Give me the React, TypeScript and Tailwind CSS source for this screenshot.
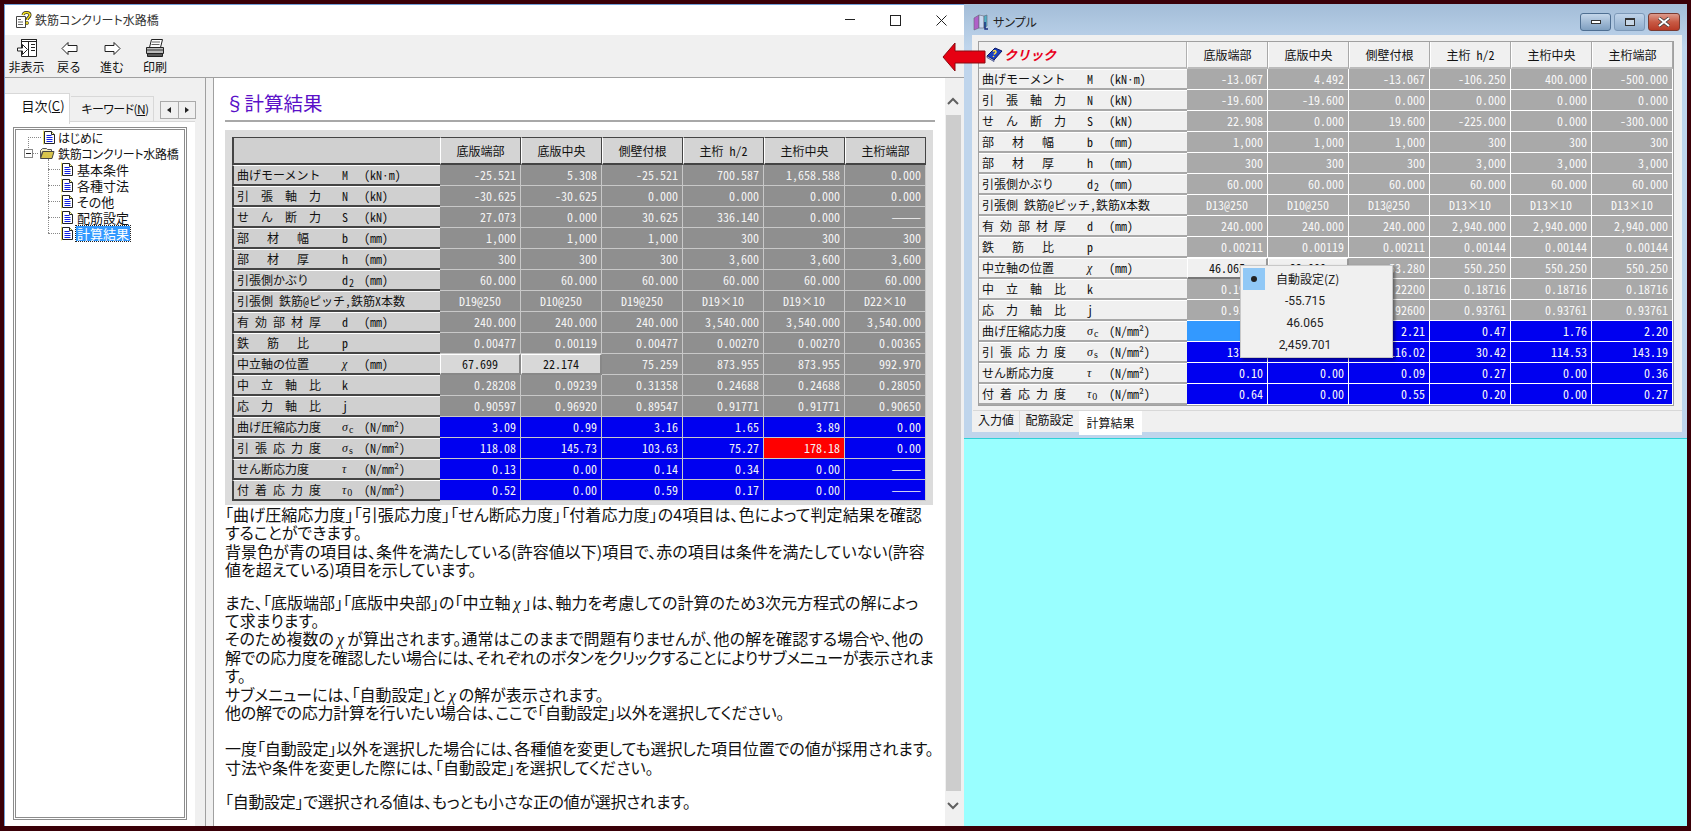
import type { ReactNode } from "react";

type Kind = "gray" | "button" | "blue" | "center";

interface Row {
    name: string;
    track: string;
    sym?: string;
    greek?: boolean;
    sub?: string;
    unit?: string;
    kind: Kind;
    vals: string[];
}

const heads = ["底版端部", "底版中央", "側壁付根", "主桁 h/2", "主桁中央", "主桁端部"];

function rows(v: string[][]): Row[] {
    return [
        { name: "曲げモーメント", track: "", sym: "M", unit: "(kN·m)", kind: "gray", vals: v[0] },
        { name: "引張軸力", track: "tracking-[12px]", sym: "N", unit: "(kN)", kind: "gray", vals: v[1] },
        { name: "せん断力", track: "tracking-[12px]", sym: "S", unit: "(kN)", kind: "gray", vals: v[2] },
        { name: "部材幅", track: "tracking-[18px]", sym: "b", unit: "(mm)", kind: "gray", vals: v[3] },
        { name: "部材厚", track: "tracking-[18px]", sym: "h", unit: "(mm)", kind: "gray", vals: v[4] },
        { name: "引張側かぶり", track: "", sym: "d", sub: "2", unit: "(mm)", kind: "gray", vals: v[5] },
        { name: "引張側 鉄筋@ピッチ,鉄筋X本数", track: "", kind: "center", vals: v[6] },
        { name: "有効部材厚", track: "tracking-[6px]", sym: "d", unit: "(mm)", kind: "gray", vals: v[7] },
        { name: "鉄筋比", track: "tracking-[18px]", sym: "p", kind: "gray", vals: v[8] },
        { name: "中立軸の位置", track: "", sym: "χ", greek: true, unit: "(mm)", kind: "button", vals: v[9] },
        { name: "中立軸比", track: "tracking-[12px]", sym: "k", kind: "gray", vals: v[10] },
        { name: "応力軸比", track: "tracking-[12px]", sym: "j", kind: "gray", vals: v[11] },
        { name: "曲げ圧縮応力度", track: "", sym: "σ", greek: true, sub: "c", unit: "(N/mm²)", kind: "blue", vals: v[12] },
        { name: "引張応力度", track: "tracking-[6px]", sym: "σ", greek: true, sub: "s", unit: "(N/mm²)", kind: "blue", vals: v[13] },
        { name: "せん断応力度", track: "", sym: "τ", greek: true, unit: "(N/mm²)", kind: "blue", vals: v[14] },
        { name: "付着応力度", track: "tracking-[6px]", sym: "τ", greek: true, sub: "0", unit: "(N/mm²)", kind: "blue", vals: v[15] },
    ];
}

const dash = "———";

const leftRows = rows([
    ["-25.521", "5.308", "-25.521", "700.587", "1,658.588", "0.000"],
    ["-30.625", "-30.625", "0.000", "0.000", "0.000", "0.000"],
    ["27.073", "0.000", "30.625", "336.140", "0.000", dash],
    ["1,000", "1,000", "1,000", "300", "300", "300"],
    ["300", "300", "300", "3,600", "3,600", "3,600"],
    ["60.000", "60.000", "60.000", "60.000", "60.000", "60.000"],
    ["D19@250", "D10@250", "D19@250", "D19×10", "D19×10", "D22×10"],
    ["240.000", "240.000", "240.000", "3,540.000", "3,540.000", "3,540.000"],
    ["0.00477", "0.00119", "0.00477", "0.00270", "0.00270", "0.00365"],
    ["67.699", "22.174", "75.259", "873.955", "873.955", "992.970"],
    ["0.28208", "0.09239", "0.31358", "0.24688", "0.24688", "0.28050"],
    ["0.90597", "0.96920", "0.89547", "0.91771", "0.91771", "0.90650"],
    ["3.09", "0.99", "3.16", "1.65", "3.89", "0.00"],
    ["118.08", "145.73", "103.63", "75.27", "178.18", "0.00"],
    ["0.13", "0.00", "0.14", "0.34", "0.00", dash],
    ["0.52", "0.00", "0.59", "0.17", "0.00", dash],
]);

// cells fully under the popup menu stay empty
const rightRows = rows([
    ["-13.067", "4.492", "-13.067", "-106.250", "400.000", "-500.000"],
    ["-19.600", "-19.600", "0.000", "0.000", "0.000", "0.000"],
    ["22.908", "0.000", "19.600", "-225.000", "0.000", "-300.000"],
    ["1,000", "1,000", "1,000", "300", "300", "300"],
    ["300", "300", "300", "3,000", "3,000", "3,000"],
    ["60.000", "60.000", "60.000", "60.000", "60.000", "60.000"],
    ["D13@250", "D10@250", "D13@250", "D13×10", "D13×10", "D13×10"],
    ["240.000", "240.000", "240.000", "2,940.000", "2,940.000", "2,940.000"],
    ["0.00211", "0.00119", "0.00211", "0.00144", "0.00144", "0.00144"],
    ["46.065", "22.000", "53.280", "550.250", "550.250", "550.250"],
    ["0.19194", "", "0.22200", "0.18716", "0.18716", "0.18716"],
    ["0.93602", "", "0.92600", "0.93761", "0.93761", "0.93761"],
    ["", "", "2.21", "0.47", "1.76", "2.20"],
    ["137.44", "", "116.02", "30.42", "114.53", "143.19"],
    ["0.10", "0.00", "0.09", "0.27", "0.00", "0.36"],
    ["0.64", "0.00", "0.55", "0.20", "0.00", "0.27"],
]);

function Label({ row }: { row: Row }) {
    return (
        <>
            <span className={`shrink-0 whitespace-nowrap ${row.sym ? "w-[105px]" : "w-[205px]"} ${row.track}`}>{row.name}</span>
            {row.sym && (
                <span className={`flex w-[22px] shrink-0 items-baseline ${row.greek ? "font-['Liberation_Serif',serif] italic" : ""}`}>
                    {row.sym}
                    {row.sub && <span className="ml-px translate-y-[2px] text-[10px] not-italic">{row.sub}</span>}
                </span>
            )}
            {row.unit && <span className="whitespace-nowrap">{row.unit}</span>}
        </>
    );
}

function LeftTable() {
    return (
        <div className="w-[694px] text-[12px] leading-none text-[#111] [font-feature-settings:'hwid']">
            <div className="flex h-[28px]">
                <div className="w-[208px] border-t border-l-2 border-b-2 border-[#444] bg-[#d0d0d0]" />
                {heads.map((h) => (
                    <div key={h} className="flex w-[81px] items-center justify-center border-t border-r border-b-2 border-[#444] border-l border-l-white bg-[#d4d4d4]">
                        {h}
                    </div>
                ))}
            </div>
            {leftRows.map((row) => (
                <div key={row.name} className="flex h-[21px]">
                    <div className="flex w-[208px] items-center border-t border-l-2 border-b-2 border-t-white border-l-[#444] border-b-[#444] bg-[#d0d0d0] pl-[3px]">
                        <Label row={row} />
                    </div>
                    {row.vals.map((v, i) => {
                        if (row.kind === "button" && i < 2) {
                            return (
                                <div key={i} className="flex w-[81px] items-center justify-center border-t border-l border-r-2 border-b-2 border-t-white border-l-white border-r-[#888] border-b-[#888] bg-[#d8d8d8]">
                                    {v}
                                </div>
                            );
                        }
                        const red = v === "178.18";
                        const bg = red ? "bg-[#ff0000]" : row.kind === "blue" ? "bg-[#0000f0]" : "bg-[#8f8f8f]";
                        return (
                            <div key={i} className={`flex w-[81px] items-center border-r border-b border-[#c8c8c8] text-[#f4f4f4] ${bg} ${row.kind === "center" ? "justify-center" : "justify-end pr-[4px]"}`}>
                                {v}
                            </div>
                        );
                    })}
                </div>
            ))}
        </div>
    );
}

function RightTable() {
    return (
        <div className="w-[696px] border border-[#a0a0a0] text-[12px] leading-none text-[#111] [font-feature-settings:'hwid']">
            <div className="flex h-[27px]">
                <div className="flex w-[208px] items-center gap-px border-r border-b-2 border-r-[#b0b0b0] border-b-[#bbb] bg-[#f0f0f0] pl-[7px]">
                    <BookIcon />
                    <span className="text-[13px] font-bold italic text-[#e8001c] [font-feature-settings:'normal']">クリック</span>
                </div>
                {heads.map((h) => (
                    <div key={h} className="flex w-[81px] items-center justify-center border-r border-b-2 border-r-[#a8a8a8] border-b-[#bbb] border-l border-l-white bg-[#f0f0f0]">
                        {h}
                    </div>
                ))}
            </div>
            {rightRows.map((row) => (
                <div key={row.name} className="flex h-[21px]">
                    <div className="flex w-[208px] items-center border-t border-b-2 border-t-white border-b-[#a8a8a8] bg-[#f0f0f0] pl-[3px]">
                        <Label row={row} />
                    </div>
                    {row.vals.map((v, i) => {
                        if (row.kind === "button" && i < 2) {
                            return (
                                <div key={i} className="flex w-[81px] items-center justify-center border-t border-l border-r-2 border-b-2 border-t-white border-l-white border-r-[#999] border-b-[#777] bg-[#f0f0f0]">
                                    {v}
                                </div>
                            );
                        }
                        const picked = row.name === "曲げ圧縮応力度" && i === 0;
                        const bg = picked ? "bg-[#3399ff]" : row.kind === "blue" ? "bg-[#0000f0]" : "bg-[#a9a9a9]";
                        return (
                            <div key={i} className={`flex w-[81px] items-center border-r border-b border-white text-[#f8f8f8] ${bg} ${row.kind === "center" ? "justify-center" : "justify-end pr-[4px]"}`}>
                                {v}
                            </div>
                        );
                    })}
                </div>
            ))}
        </div>
    );
}

function PageIcon() {
    return (
        <svg width="13" height="15" viewBox="0 0 13 15" className="shrink-0">
            <path d="M1.5 1.5h7l3 3v9h-10z" fill="#fff" stroke="#222" />
            <path d="M0.5 .5v14" stroke="#e8e070" />
            <path d="M3.5 5.5h5M3.5 7.5h6M3.5 9.5h6M3.5 11.5h6" stroke="#1020e0" />
            <path d="M8.5 1.5v3h3" fill="#ffff99" stroke="#222" />
        </svg>
    );
}

function FolderIcon() {
    return (
        <svg width="16" height="13" viewBox="0 0 16 13" className="shrink-0">
            <path d="M1.5 3.5l2-2h4l1 1h4v2h-9l-2 6z" fill="#f4ecc0" stroke="#555" />
            <path d="M1.5 11.5l2.5-7h11l-2 7z" fill="#d8c44c" stroke="#444" />
        </svg>
    );
}

function BookIcon() {
    return (
        <svg width="17" height="15" viewBox="0 0 17 15" className="shrink-0">
            <path d="M1 9l8-8 7 3-8 9z" fill="#1a3fc0" stroke="#0a1660" />
            <path d="M1 9l7 4 0 1.5-7-4z" fill="#c8d4f0" stroke="#0a1660" strokeWidth=".6" />
            <path d="M7 4.5c1-1.5 3.5-.8 3 .8-.3 1-1.6 1.100-2 2.200" fill="none" stroke="#ffe040" strokeWidth="1.400" />
            <circle cx="7.500" cy="9.500" r=".8" fill="#ffe040" />
        </svg>
    );
}

function ToolBtn({ label, width, children }: { label: string; width: string; children: ReactNode }) {
    return (
        <div className={`flex flex-col items-center ${width}`}>
            <div className="flex h-[22px] items-center">{children}</div>
            <span className="mt-px text-[12px] leading-[14px] text-[#111]">{label}</span>
        </div>
    );
}

function TreeRow({ text, level, selected, folder }: { text: string; level: 1 | 2; selected?: boolean; folder?: boolean }) {
    const indent = folder ? "gap-[2px] pl-[23px]" : level === 1 ? "gap-px pl-[27px]" : "gap-[2px] pl-[45px]";
    const size = level === 1 ? "text-[12px] tracking-[-0.3px]" : "text-[13px]";
    return (
        <div className={`flex h-[16px] items-center ${indent}`}>
            {folder ? <FolderIcon /> : <PageIcon />}
            <span className={`whitespace-nowrap px-px leading-[15px] [font-feature-settings:'palt'] ${size} ${selected ? "bg-[#3399ff] text-white outline-1 outline-dotted outline-[#222]" : "text-[#111]"}`}>
                {text}
            </span>
        </div>
    );
}

function Tree() {
    return (
        <div className="relative h-full border-[3px] border-double border-[#8c8c8c] bg-white">
            <div className="-mt-px">
                <TreeRow text="はじめに" level={1} />
                <TreeRow text="鉄筋コンクリート水路橋" level={1} folder />
                <TreeRow text="基本条件" level={2} />
                <TreeRow text="各種寸法" level={2} />
                <TreeRow text="その他" level={2} />
                <TreeRow text="配筋設定" level={2} />
                <TreeRow text="計算結果" level={2} selected />
            </div>
            <div className="absolute left-[12px] top-[7px] h-[13px] border-l border-dotted border-[#888]" />
            <div className="absolute left-[12px] top-[7px] w-[13px] border-t border-dotted border-[#888]" />
            <div className="absolute left-[8px] top-[19px] flex h-[9px] w-[9px] items-center justify-center border border-[#888] bg-white">
                <div className="h-px w-[5px] bg-[#222]" />
            </div>
            <div className="absolute left-[17px] top-[23px] w-[5px] border-t border-dotted border-[#888]" />
            {[39, 55, 71, 87, 103].map((t) => (
                <div key={t} className="absolute left-[32px] w-[12px] border-t border-dotted border-[#888]" style={{ top: t }} />
            ))}
            <div className="absolute left-[32px] top-[29px] h-[74px] border-l border-dotted border-[#888]" />
        </div>
    );
}

function Chi() {
    return <span className="mx-[3px] font-['Liberation_Serif',serif] italic leading-[0]">χ</span>;
}

function HelpPane() {
    return (
        <div className="flex min-h-0 flex-1 bg-white">
            <div className="min-w-0 flex-1 pl-[11px] pt-[14px]">
                <h2 className="flex h-[22px] text-[19.5px] leading-[22px] text-[#5a10c8]">§計算結果</h2>
                <div className="mt-[6px] h-[2px] w-[710px] bg-[#a8a8a8]" />
                <div className="mt-[8px] w-[708px] bg-[#dcdcdc] px-[7px] pb-[4px] pt-[7px]">
                    <LeftTable />
                </div>
                <div className="text-[16px] leading-[18.4px] text-[#111] [font-feature-settings:'palt']">
                    <div className="whitespace-nowrap">
                        <p className="tracking-[0.08px]">「曲げ圧縮応力度」「引張応力度」「せん断応力度」「付着応力度」の4項目は、色によって判定結果を確認</p>
                        <p>することができます。</p>
                        <p>背景色が青の項目は、条件を満たしている(許容値以下)項目で、赤の項目は条件を満たしていない(許容</p>
                        <p>値を超えている)項目を示しています。</p>
                    </div>
                    <div className="mt-[14px] whitespace-nowrap">
                        <p>また、「底版端部」「底版中央部」の「中立軸<Chi />」は、軸力を考慮しての計算のため3次元方程式の解によっ</p>
                        <p>て求まります。</p>
                        <p className="tracking-[0.08px]">そのため複数の<Chi />が算出されます。通常はこのままで問題有りませんが、他の解を確認する場合や、他の</p>
                        <p className="tracking-[-0.33px]">解での応力度を確認したい場合には、それぞれのボタンをクリックすることによりサブメニューが表示されま</p>
                        <p>す。</p>
                        <p>サブメニューには、「自動設定」と<Chi />の解が表示されます。</p>
                        <p className="tracking-[-0.2px]">他の解での応力計算を行いたい場合は、ここで「自動設定」以外を選択してください。</p>
                    </div>
                    <div className="mt-[18px] whitespace-nowrap">
                        <p className="tracking-[-0.08px]">一度「自動設定」以外を選択した場合には、各種値を変更しても選択した項目位置での値が採用されます。</p>
                        <p>寸法や条件を変更した際には、「自動設定」を選択してください。</p>
                    </div>
                    <p className="mt-[16px] whitespace-nowrap tracking-[-0.3px]">「自動設定」で選択される値は、もっとも小さな正の値が選択されます。</p>
                </div>
            </div>
            <div className="flex w-[19px] shrink-0 flex-col items-center bg-[#f0f0f0] pr-[3px]">
                <svg width="12" height="8" viewBox="0 0 12 8" className="mt-[19px]">
                    <path d="M1 7l5-5 5 5" fill="none" stroke="#606060" strokeWidth="2" />
                </svg>
                <div className="mt-[10px] w-[15px] flex-1 bg-[#cdcdcd]" />
                <svg width="12" height="8" viewBox="0 0 12 8" className="mb-[16px] mt-[11px]">
                    <path d="M1 1l5 5 5-5" fill="none" stroke="#606060" strokeWidth="2" />
                </svg>
            </div>
        </div>
    );
}

function HelpWindow() {
    return (
        <div className="flex w-[960px] shrink-0 flex-col border-l border-t border-[#6f9fd8] bg-white font-['Noto_Sans_CJK_JP',sans-serif]">
            <div className="flex h-[30px] shrink-0 items-center bg-white">
                <svg width="20" height="20" viewBox="0 0 20 20" className="ml-[9px]">
                    <path d="M2.500 6.500h9v11h-9z" fill="#fff" stroke="#444" />
                    <path d="M4 9.500h3M4 12h5M4 14.500h5" stroke="#666" />
                    <path d="M9 5c.5-3 7-3.500 7 0 0 2.500-3 2.500-3 5" fill="none" stroke="#222" strokeWidth="3" />
                    <path d="M9 5c.5-3 7-3.500 7 0 0 2.500-3 2.500-3 5" fill="none" stroke="#f4e020" strokeWidth="1.600" />
                    <circle cx="13" cy="13" r="1.600" fill="#f4e020" stroke="#222" strokeWidth=".6" />
                </svg>
                <span className="ml-px text-[12px] text-[#333] [font-feature-settings:'palt']">鉄筋コンクリート水路橋</span>
                <div className="flex-1" />
                <div className="mb-[2px] mr-[35px] h-px w-[10px] bg-[#222]" />
                <div className="mr-[35px] h-[11px] w-[11px] border border-[#222]" />
                <svg width="11" height="11" viewBox="0 0 11 11" className="mr-[17px]">
                    <path d="M.5.5l10 10M10.500.5l-10 10" stroke="#222" />
                </svg>
            </div>
            <div className="flex h-[43px] shrink-0 border-b border-[#a0a0a0] bg-[#f0f0f0] pt-[2px]">
                <ToolBtn label="非表示" width="w-[43px]">
                    <svg width="22" height="20" viewBox="0 0 22 20">
                        <path d="M5.500 1.500h15v17h-15z" fill="#fff" stroke="#222" />
                        <path d="M5.500 1.500h15v2h-15zM12.500 3.500v15" fill="none" stroke="#222" />
                        <path d="M15 6.500h4M15 9.500h4M15 12.500h4" stroke="#222" />
                        <path d="M1.500 10h5v-3.500l5 5-5 5v-3.500h-5z" fill="#fff" stroke="#222" />
                    </svg>
                </ToolBtn>
                <ToolBtn label="戻る" width="w-[42px]">
                    <svg width="17" height="13" viewBox="0 0 17 13">
                        <path d="M7 .5l-6 6 6 6v-3h9v-6h-9z" fill="#fff" stroke="#222" />
                    </svg>
                </ToolBtn>
                <ToolBtn label="進む" width="w-[44px]">
                    <svg width="17" height="13" viewBox="0 0 17 13">
                        <path d="M10 .5l6 6-6 6v-3h-9v-6h9z" fill="#fff" stroke="#222" />
                    </svg>
                </ToolBtn>
                <ToolBtn label="印刷" width="w-[42px]">
                    <svg width="20" height="20" viewBox="0 0 20 20">
                        <path d="M6.500 1.500h11l-2 8h-11z" fill="#fff" stroke="#222" />
                        <path d="M7 4h8M6.500 6.500h8" stroke="#666" />
                        <path d="M1.500 9.500h17v6h-17z" fill="#bbb" stroke="#222" />
                        <path d="M2.500 15.500h15v3h-15z" fill="#555" stroke="#222" />
                        <path d="M1.500 12h17" stroke="#333" />
                    </svg>
                </ToolBtn>
            </div>
            <div className="flex min-h-0 flex-1">
                <div className="flex w-[200px] shrink-0 flex-col bg-[#f0f0f0] pt-[15px]">
                    <div className="relative z-10 flex h-[28px] shrink-0">
                        <div className="flex h-[31px] w-[65px] items-center justify-center border-r border-t border-[#d8d8d8] bg-white pb-[6px] pl-[12px] text-[13px] text-[#111] [font-feature-settings:'palt']">
                            <span>目次(<u>C</u>)</span>
                        </div>
                        <div className="ml-px mt-[3px] flex h-[25px] w-[83px] items-center justify-center border-r border-t border-[#d8d8d8] bg-[#f0f0f0] pl-[6px] text-[12px] tracking-[-0.6px] text-[#111] [font-feature-settings:'palt']">
                            <span>キーワード(<u>N</u>)</span>
                        </div>
                        <div className="ml-[6px] mt-[8px] flex h-[18px] w-[36px] border border-[#aaa] bg-[#f0f0f0]">
                            <div className="flex flex-1 items-center justify-center border-r border-[#aaa]">
                                <div className="h-0 w-0 border-y-[3px] border-r-[4px] border-y-transparent border-r-[#222]" />
                            </div>
                            <div className="flex flex-1 items-center justify-center">
                                <div className="h-0 w-0 border-y-[3px] border-l-[4px] border-y-transparent border-l-[#222]" />
                            </div>
                        </div>
                    </div>
                    <div className="min-h-0 w-[190px] flex-1 border-t border-[#d8d8d8] bg-white px-[8px] pb-[6px] pt-[5px]">
                        <Tree />
                    </div>
                </div>
                <div className="w-[9px] shrink-0 border-x border-[#a0a0a0] bg-[#f0f0f0]" />
                <HelpPane />
            </div>
        </div>
    );
}

function SampleWindow() {
    return (
        <div className="flex h-[434px] shrink-0 flex-col bg-gradient-to-b from-[#a3bdd8] from-0% to-[#bfd5ec] to-[10%] pb-[6px] pl-[8px] pr-[5px]">
            <div className="flex h-[31px] shrink-0 items-center pt-[5px]">
                <svg width="18" height="18" viewBox="0 0 18 18">
                    <path d="M2 5l5-3v13l-5 2z" fill="#b060c8" stroke="#667" strokeWidth=".6" />
                    <path d="M7 2l5 1 0 12-5 0z" fill="#c8d8f0" stroke="#667" strokeWidth=".6" />
                    <path d="M12 3l3-1v11l-3 2z" fill="#50b0c8" stroke="#667" strokeWidth=".6" />
                    <path d="M13 9v7h3" fill="none" stroke="#1a3080" strokeWidth="1.500" />
                </svg>
                <span className="ml-[3px] text-[12px] text-[#222] [font-feature-settings:'palt']">サンプル</span>
                <div className="flex-1" />
                <div className="flex h-[18px] w-[31px] items-center justify-center rounded-[3px] border border-[#4f6f92] bg-gradient-to-b from-[#c4d6ea] to-[#7f9fc0]">
                    <div className="h-[4px] w-[10px] border border-[#333] bg-white" />
                </div>
                <div className="ml-[3px] flex h-[18px] w-[31px] items-center justify-center rounded-[3px] border border-[#7d99b8] bg-gradient-to-b from-[#c0d4ea] to-[#90aecd]">
                    <div className="h-[8px] w-[10px] border border-t-2 border-[#333] bg-[#c8d8e8]" />
                </div>
                <div className="ml-[3px] mr-[2px] flex h-[18px] w-[32px] items-center justify-center rounded-[3px] border border-[#7a3a30] bg-gradient-to-b from-[#dc9a8c] via-[#c85a44] to-[#b83a26]">
                    <svg width="14" height="10" viewBox="0 0 14 10">
                        <path d="M2 1l10 8M12 1L2 9" stroke="#333" strokeWidth="3.400" />
                        <path d="M2 1l10 8M12 1L2 9" stroke="#fff" strokeWidth="2" />
                    </svg>
                </div>
            </div>
            <div className="flex min-h-0 flex-1 flex-col bg-[#f0f0f0] pl-[6px] pt-[6px]">
                <RightTable />
                <div className="-ml-[5px] mt-[4px] flex flex-1 border-t border-[#d8d8d8] text-[12px] text-[#111]">
                    <div className="flex w-[47px] items-center justify-center border-r border-[#d8d8d8] pb-[6px]">入力値</div>
                    <div className="flex w-[59px] items-center justify-center pb-[6px]">配筋設定</div>
                    <div className="flex w-[63px] items-center justify-center bg-white">計算結果</div>
                </div>
            </div>
        </div>
    );
}

export default function App() {
    return (
        <div className="relative flex h-[831px] w-[1691px] overflow-hidden bg-[#3a0008] pb-[5px] pl-[4px] pr-[4px] pt-[4px] font-['Noto_Sans_CJK_JP',sans-serif]">
            <HelpWindow />
            <div className="flex min-w-0 flex-1 flex-col">
                <SampleWindow />
                <div className="flex-1 border-t border-[#30d0d8] bg-[#99ffff]" />
            </div>

            {/* arrow over the gap between the windows */}
            <svg width="44" height="30" viewBox="0 0 44 30" className="absolute left-[942px] top-[42px]">
                <path d="M1 15L13 1v8h30v12H13v8z" fill="#e60012" stroke="#8a0a10" />
            </svg>

            {/* popup menu */}
            <div className="absolute left-[1240px] top-[265px] h-[93px] w-[153px] border border-[#c8c8c8] bg-[#f0f0f0] p-[2px] text-[12px] text-[#222] shadow-[2px_2px_3px_rgba(0,0,0,0.45)]">
                <div className="flex h-[22px] items-center">
                    <div className="flex h-[22px] w-[22px] items-center justify-center bg-[#90c8f6]">
                        <div className="h-[6px] w-[6px] rounded-full bg-[#222]" />
                    </div>
                    <span className="ml-[11px]">自動設定(Z)</span>
                </div>
                {["-55.715", "46.065", "2,459.701"].map((v) => (
                    <div key={v} className="flex h-[22px] items-center justify-center pr-[23px] font-['Roboto',sans-serif]">{v}</div>
                ))}
            </div>
        </div>
    );
}
